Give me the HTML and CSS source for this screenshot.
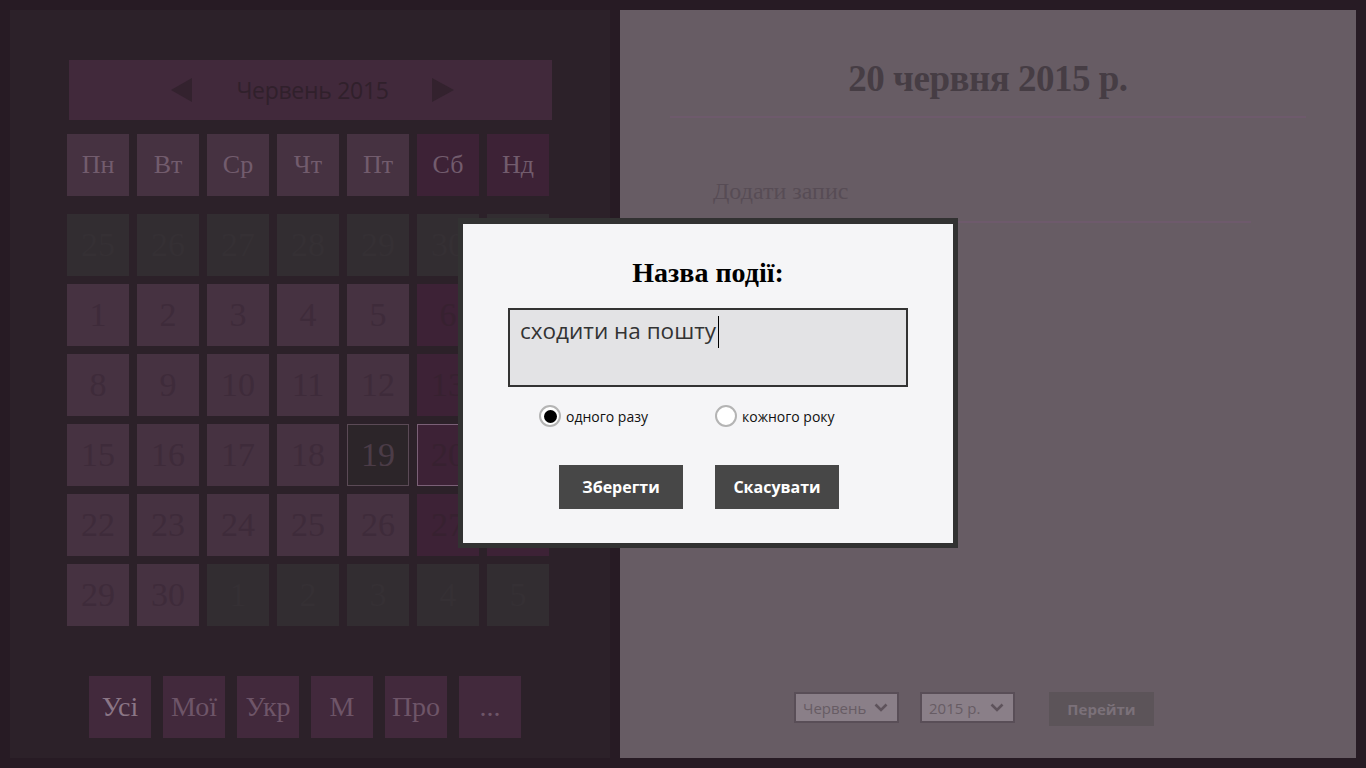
FILE: index.html
```html
<!DOCTYPE html>
<html lang="uk">
<head>
<meta charset="utf-8">
<title>Календар</title>
<link rel="stylesheet" href="styles.css">
</head>
<body>
<div class="app">
  <section class="left">
    <div class="month-bar">
      <svg class="arrow" width="22" height="24" viewBox="0 0 22 24"><polygon points="21,0 21,24 0,12" fill="#33222e"/></svg>
      <span class="month-title">Червень 2015</span>
      <svg class="arrow" width="22" height="24" viewBox="0 0 22 24"><polygon points="0,0 0,24 22,12" fill="#33222e"/></svg>
    </div>
    <div class="week">
      <div class="wd">Пн</div><div class="wd">Вт</div><div class="wd">Ср</div><div class="wd">Чт</div><div class="wd">Пт</div><div class="wd we">Сб</div><div class="wd we">Нд</div>
    </div>
    <div class="grid">
      <div class="c out">25</div><div class="c out">26</div><div class="c out">27</div><div class="c out">28</div><div class="c out">29</div><div class="c out">30</div><div class="c out">31</div>
      <div class="c">1</div><div class="c">2</div><div class="c">3</div><div class="c">4</div><div class="c">5</div><div class="c we">6</div><div class="c we">7</div>
      <div class="c">8</div><div class="c">9</div><div class="c">10</div><div class="c">11</div><div class="c">12</div><div class="c we">13</div><div class="c we">14</div>
      <div class="c">15</div><div class="c">16</div><div class="c">17</div><div class="c">18</div><div class="c today">19</div><div class="c we sel">20</div><div class="c we">21</div>
      <div class="c">22</div><div class="c">23</div><div class="c">24</div><div class="c">25</div><div class="c">26</div><div class="c we">27</div><div class="c we">28</div>
      <div class="c">29</div><div class="c">30</div><div class="c out">1</div><div class="c out">2</div><div class="c out">3</div><div class="c out">4</div><div class="c out">5</div>
    </div>
    <div class="filters">
      <div class="f active">Усі</div><div class="f">Мої</div><div class="f">Укр</div><div class="f">М</div><div class="f">Про</div><div class="f">...</div>
    </div>
  </section>
  <section class="right">
    <h1 class="day-title">20 червня 2015 р.</h1>
    <div class="add-entry">Додати запис</div>
    <div class="spacer"></div>
    <div class="nav">
      <div class="select sel-month"><span>Червень</span><svg width="14" height="9" viewBox="0 0 14 9"><polyline points="1.5,1.5 7,7 12.5,1.5" fill="none" stroke="#5e535b" stroke-width="2.6"/></svg></div>
      <div class="select sel-year"><span>2015 р.</span><svg width="14" height="9" viewBox="0 0 14 9"><polyline points="1.5,1.5 7,7 12.5,1.5" fill="none" stroke="#5e535b" stroke-width="2.6"/></svg></div>
      <div class="go">Перейти</div>
    </div>
  </section>
</div>

<div class="dialog">
  <h2 class="dlg-title">Назва події:</h2>
  <div class="field">сходити на пошту</div>
  <div class="radios">
    <label class="radio r1"><span class="dot on"></span>одного разу</label>
    <label class="radio"><span class="dot"></span>кожного року</label>
  </div>
  <div class="buttons">
    <div class="btn">Зберегти</div>
    <div class="btn">Скасувати</div>
  </div>
</div>
</body>
</html>
```

FILE: styles.css
```css
* { box-sizing: border-box; }
html, body { margin: 0; padding: 0; }
body {
  width: 1366px;
  height: 768px;
  background: #271b24;
  overflow: hidden;
  font-family: "Liberation Serif", serif;
}
.app {
  display: flex;
  gap: 10px;
  padding: 10px;
  height: 768px;
}
.left {
  width: 600px;
  height: 748px;
  background: #2c2129;
  display: flex;
  flex-direction: column;
  padding: 50px 0 0 57px;
}
.month-bar {
  width: 483px;
  height: 60px;
  margin-left: 2px;
  background: #41293b;
  display: flex;
  align-items: center;
  justify-content: center;
  gap: 43px;
  padding-left: 4px;
}
.month-title {
  font-family: "Open Sans", sans-serif;
  font-size: 23px;
  color: #30202b;
  letter-spacing: -0.3px;
}
.week {
  display: grid;
  grid-template-columns: repeat(7, 62px);
  gap: 8px;
  margin-top: 14px;
}
.wd {
  height: 62px;
  background: #463241;
  color: #725c6d;
  font-size: 26px;
  display: flex;
  align-items: center;
  justify-content: center;
}
.wd.we { background: #3d2236; }
.grid {
  display: grid;
  grid-template-columns: repeat(7, 62px);
  grid-auto-rows: 62px;
  gap: 8px;
  margin-top: 18px;
}
.c {
  background: #463241;
  color: #3e2b3a;
  font-size: 34px;
  display: flex;
  align-items: center;
  justify-content: center;
}
.c.we { background: #3d2236; color: #372130; }
.c.out { background: #322d31; color: #353034; }
.c.today { background: #2c2529; border: 1px solid #5b4a56; color: #4b3c47; }
.c.sel { border: 1px solid #7b6077; }
.filters {
  display: flex;
  gap: 12px;
  margin-top: 50px;
  margin-left: 22px;
}
.f {
  width: 62px;
  height: 62px;
  background: #42293c;
  color: #6e5568;
  font-size: 28px;
  display: flex;
  align-items: center;
  justify-content: center;
}
.f.active { color: #8b7686; }

.right {
  width: 736px;
  height: 748px;
  background: #675c64;
  display: flex;
  flex-direction: column;
  padding: 0 50px;
}
.day-title {
  margin: 0;
  padding-top: 48px;
  height: 108px;
  border-bottom: 2px solid #6e5a6c;
  text-align: center;
  font-size: 37px;
  font-weight: bold;
  color: #463d44;
  line-height: 42px;
  letter-spacing: -0.5px;
}
.add-entry {
  margin: 55px 55px 0 43px;
  height: 50px;
  border-bottom: 2px solid #6e5a6c;
  font-size: 24px;
  color: #574c55;
  padding-top: 5px;
}
.spacer { flex: 1; }
.nav {
  display: flex;
  align-items: flex-start;
  margin-left: 124px;
  margin-bottom: 32px;
}
.select {
  height: 31px;
  background: #8a7f88;
  border: 2px solid #594e57;
  display: flex;
  align-items: center;
  justify-content: space-between;
  padding: 0 9px 0 7px;
  font-family: "Open Sans", sans-serif;
  font-size: 15px;
  color: #675c64;
}
.sel-month { width: 105px; }
.sel-year { width: 95px; margin-left: 21px; }
.go {
  width: 105px;
  height: 34px;
  margin-left: 34px;
  background: #5c5459;
  display: flex;
  align-items: center;
  justify-content: center;
  font-family: "Open Sans", sans-serif;
  font-weight: bold;
  font-size: 15px;
  color: #7b7179;
}

.dialog {
  position: absolute;
  left: 458px;
  top: 218px;
  width: 500px;
  height: 330px;
  background: #f5f5f7;
  border: 5px solid #323232;
  border-top-width: 6px;
  display: flex;
  flex-direction: column;
  align-items: center;
  font-family: "Open Sans", sans-serif;
}
.dlg-title {
  margin: 0;
  margin-top: 33px;
  font-family: "Liberation Serif", serif;
  font-size: 28px;
  font-weight: bold;
  line-height: 32px;
  color: #000;
}
.field {
  margin-top: 19px;
  width: 400px;
  height: 79px;
  background: #e3e3e5;
  border: 2px solid #333;
  padding: 4px 10px;
  font-size: 22.5px;
  line-height: 34px;
  color: #333;
}
.field::after {
  content: "";
  display: inline-block;
  width: 1px;
  height: 32px;
  margin-left: 2px;
  background: #000;
  vertical-align: -9px;
}
.radios {
  align-self: flex-start;
  margin-left: 76px;
  margin-top: 18px;
  display: flex;
}
.radio {
  display: flex;
  align-items: center;
  gap: 5px;
  font-size: 14px;
  color: #111;
}
.radio.r1 { width: 176px; }
.dot {
  width: 22px;
  height: 22px;
  border-radius: 50%;
  border: 2px solid #b4b4b4;
  background: #fff;
  display: flex;
  align-items: center;
  justify-content: center;
}
.dot.on::after {
  content: "";
  width: 13px;
  height: 13px;
  border-radius: 50%;
  background: #000;
}
.buttons {
  align-self: flex-start;
  margin-left: 96px;
  margin-top: 38px;
  display: flex;
  gap: 32px;
}
.btn {
  width: 124px;
  height: 44px;
  background: #474747;
  color: #fff;
  font-weight: bold;
  font-size: 16px;
  display: flex;
  align-items: center;
  justify-content: center;
}
```
